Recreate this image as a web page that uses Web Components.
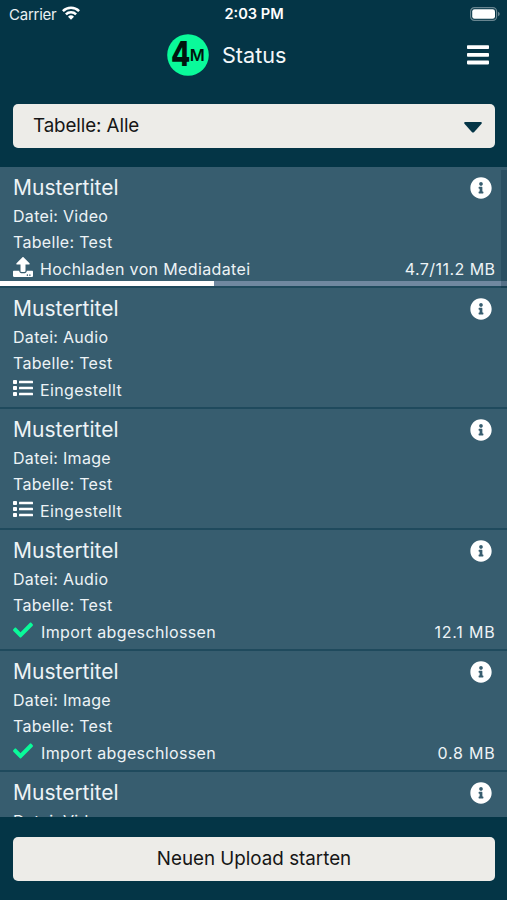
<!DOCTYPE html>
<html lang="de">
<head>
<meta charset="utf-8">
<title>Status</title>
<style>
html,body{margin:0;height:100%}
body{background:#043546;overflow:hidden;font-family:Inter,"Liberation Sans",sans-serif}
</style>
</head>
<body>
<status-app></status-app>
<script>
const ICONS = {
  info: '<svg viewBox="0 0 512 512"><path fill="currentColor" d="M256 8C119.043 8 8 119.083 8 256c0 136.997 111.043 248 248 248s248-111.003 248-248C504 119.083 392.957 8 256 8zm0 110c23.196 0 42 18.804 42 42s-18.804 42-42 42-42-18.804-42-42 18.804-42 42-42zm56 254c0 6.627-5.373 12-12 12h-88c-6.627 0-12-5.373-12-12v-24c0-6.627 5.373-12 12-12h12v-64h-12c-6.627 0-12-5.373-12-12v-24c0-6.627 5.373-12 12-12h64c6.627 0 12 5.373 12 12v100h12c6.627 0 12 5.373 12 12v24z"/></svg>',
  upload: '<svg viewBox="0 0 512 512"><path fill="currentColor" d="M296 384h-80c-13.3 0-24-10.7-24-24V192h-87.7c-17.8 0-26.7-21.5-14.1-34.1L242.3 5.7c7.5-7.5 19.8-7.5 27.3 0l152.2 152.2c12.6 12.6 3.7 34.1-14.1 34.1H320v168c0 13.3-10.7 24-24 24zm216-8v112c0 13.3-10.7 24-24 24H24c-13.3 0-24-10.7-24-24V376c0-13.3 10.7-24 24-24h136v8c0 30.9 25.1 56 56 56h80c30.9 0 56-25.1 56-56v-8h136c13.3 0 24 10.7 24 24zm-124 88c0-11-9-20-20-20s-20 9-20 20 9 20 20 20 20-9 20-20zm64 0c0-11-9-20-20-20s-20 9-20 20 9 20 20 20 20-9 20-20z"/></svg>',
  list: '<svg viewBox="0 0 20 20"><g fill="currentColor"><rect y="2" width="4" height="4" rx=".8"/><rect y="8" width="4" height="4" rx=".8"/><rect y="14" width="4" height="4" rx=".8"/><rect x="6" y="2.7" width="14" height="2.6" rx=".6"/><rect x="6" y="8.7" width="14" height="2.6" rx=".6"/><rect x="6" y="14.7" width="14" height="2.6" rx=".6"/></g></svg>',
  check: '<svg viewBox="0 0 512 512"><path fill="#0afa9a" d="M173.898 439.404l-166.4-166.4c-9.997-9.997-9.997-26.206 0-36.204l36.203-36.204c9.997-9.998 26.207-9.998 36.204 0L192 312.69 432.095 72.596c9.997-9.997 26.207-9.997 36.204 0l36.203 36.204c9.997 9.997 9.997 26.206 0 36.204l-294.4 294.401c-9.998 9.997-26.207 9.997-36.204-.001z"/></svg>',
  menu: '<svg viewBox="0 0 22 20"><g fill="currentColor"><rect y="0.2" width="22" height="3.8" rx=".8"/><rect y="7.9" width="22" height="3.8" rx=".8"/><rect y="15.6" width="22" height="3.8" rx=".8"/></g></svg>',
  caret: '<svg viewBox="0 0 18 11"><path fill="#043546" d="M1.3 0H16.7Q18.8.3 17.3 2L10.2 9.9Q9 11 7.8 9.9L.7 2Q-.8.3 1.3 0Z"/></svg>',
  wifi: '<svg viewBox="0 0 18 14"><g fill="none" stroke="currentColor" stroke-width="2.5"><path d="M.9 5.2a11.4 11.4 0 0 1 16.2 0"/><path d="M3.9 8.4a7.2 7.2 0 0 1 10.2 0"/></g><path fill="currentColor" d="M9 13.8 6 10.7a4.3 4.3 0 0 1 6 0Z"/></svg>',
  battery: '<svg viewBox="0 0 30 14"><rect x=".6" y=".6" width="26" height="12.8" rx="3.8" fill="none" stroke="#fff" stroke-opacity=".4" stroke-width="1.2"/><rect x="2.2" y="2.2" width="22.8" height="9.6" rx="2.3" fill="#fff"/><path d="M28 4.8c2.3.8 2.3 3.600 0 4.400z" fill="#fff" fill-opacity=".4"/></svg>',
  logo: '<svg viewBox="0 0 42 42"><circle cx="21" cy="21" r="20.8" fill="#0afa9a"/><text x="4" y="32.300" font-family="Inter,sans-serif" font-weight="800" font-size="34" textLength="19.300" lengthAdjust="spacingAndGlyphs" fill="#00150f">4</text><text x="22.800" y="27.300" font-family="Inter,sans-serif" font-weight="600" font-size="15.500" textLength="15" lengthAdjust="spacingAndGlyphs" fill="#00150f">M</text></svg>'
};
function define(name, render){
  customElements.define(name, class extends HTMLElement{
    connectedCallback(){
      if(!this.shadowRoot) this.attachShadow({mode:'open'}).innerHTML = render(this);
    }
  });
}
define('ui-icon', el => `<style>:host{display:block;flex:none}svg{display:block;width:100%;height:100%;overflow:visible}</style>${ICONS[el.getAttribute('name')]}`);

define('phone-status-bar', () => `<style>
:host{display:grid;grid-template-columns:1fr auto 1fr;align-items:center;height:28px;padding:0 8px 0 9px;box-sizing:border-box;color:#fff;font-size:15px}
.left{display:flex;align-items:center;gap:6px;color:#e9f0f3}
.carrier{letter-spacing:-.25px}
.time{font-weight:600;font-size:14.6px}
.wifi{width:18px;height:14px;color:#fff;margin-top:-2px}
.battery{width:30px;height:14px;justify-self:end;margin:-1px -1px 0 0}
</style><div class="left"><span class="carrier">Carrier</span><ui-icon class="wifi" name="wifi"></ui-icon></div><span class="time">2:03 PM</span><ui-icon class="battery" name="battery"></ui-icon>`);

define('app-header', () => `<style>
:host{display:grid;grid-template-columns:167px auto 1fr;align-items:center;height:53px;padding:0 18px 0 0;color:#f3f7f9}
.brand{grid-column:2;display:flex;align-items:center;gap:13px;font-size:21.6px}
.logo{width:42px;height:42px}
.menu{width:22px;height:20px;justify-self:end;color:#fff}
</style><div class="brand"><ui-icon class="logo" name="logo"></ui-icon><span><slot></slot></span></div><ui-icon class="menu" name="menu"></ui-icon>`);

define('table-select', () => `<style>
:host{display:flex;align-items:center;justify-content:space-between;height:44px;margin:22.500px 12px 19.500px 13px;padding:0 13px 0 20px;border-radius:5px;background:#edece8;color:#161616;font-size:18.8px;letter-spacing:-.1px}
ui-icon{width:18px;height:11px;margin-top:3px}
</style><span><slot></slot></span><ui-icon name="caret"></ui-icon>`);

define('upload-item', el => {
  const p = el.getAttribute('progress');
  const size = el.getAttribute('size');
  return `<style>
:host{display:flex;flex-direction:column;position:relative;flex:none;height:121px;box-sizing:border-box;padding:7px 12px 0 13px;border-bottom:2px solid #1f4a5d;color:#edf3f6;font-size:16px}
.head{display:flex;align-items:center;justify-content:space-between;height:28px;font-size:21px}
.title{margin-top:-1px}
.info{width:22px;height:22px;margin-right:3px;color:#fff}
.line{height:26px;line-height:28px;letter-spacing:.3px}
.foot{display:flex;align-items:center;height:26px;margin-top:2px}
.state{width:20px;height:20px;margin-right:7px;margin-top:-4px;color:#fff}
.label{letter-spacing:.36px}
.check{margin-left:1px}
.size{margin-left:auto;letter-spacing:${p ? .45 : .8}px;margin-right:-.5px}
.bar{position:absolute;left:0;right:0;bottom:0;height:5px;background:#7088a0}
.bar i{display:block;height:100%;background:#fff}
</style>
<div class="head"><span class="title"><slot></slot></span><ui-icon class="info" name="info"></ui-icon></div>
<div class="line">Datei: ${el.getAttribute('file')}</div>
<div class="line">Tabelle: Test</div>
<div class="foot"><ui-icon class="state" name="${el.getAttribute('icon')}"></ui-icon><span class="label ${el.getAttribute('icon')}">${el.getAttribute('state')}</span>${size ? `<span class="size">${size}</span>` : ''}</div>
${p ? `<div class="bar"><i style="width:${p}%"></i></div>` : ''}`;
});

define('upload-list', () => `<style>
:host{display:flex;flex-direction:column;position:relative;height:650px;overflow:hidden;background:#375d6f}
.thumb{position:absolute;right:0;top:3px;width:6px;height:118px;background:rgba(4,40,60,.25)}
</style><slot></slot><div class="thumb"></div>`);

define('primary-button', () => `<style>
:host{display:flex;align-items:center;justify-content:center;height:44px;margin:19.500px 12px 0 13px;border-radius:5px;background:#edece8;color:#161616;font-size:18.8px}
</style><span><slot></slot></span>`);

define('status-app', () => `<style>
:host{display:flex;flex-direction:column;width:507px;height:900px;overflow:hidden;background:#043546}
</style>
<phone-status-bar></phone-status-bar>
<app-header>Status</app-header>
<table-select>Tabelle: Alle</table-select>
<upload-list>
<upload-item file="Video" icon="upload" state="Hochladen von Mediadatei" size="4.7/11.2 MB" progress="42.2">Mustertitel</upload-item>
<upload-item file="Audio" icon="list" state="Eingestellt">Mustertitel</upload-item>
<upload-item file="Image" icon="list" state="Eingestellt">Mustertitel</upload-item>
<upload-item file="Audio" icon="check" state="Import abgeschlossen" size="12.1 MB">Mustertitel</upload-item>
<upload-item file="Image" icon="check" state="Import abgeschlossen" size="0.8 MB">Mustertitel</upload-item>
<upload-item file="Video" icon="list" state="Eingestellt">Mustertitel</upload-item>
</upload-list>
<primary-button>Neuen Upload starten</primary-button>`);
</script>
</body>
</html>
